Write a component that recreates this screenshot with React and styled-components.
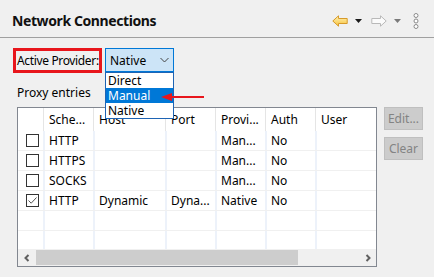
import React from "react";
import styled, { createGlobalStyle } from "styled-components";

const GlobalStyle = createGlobalStyle`
  html, body { margin: 0; padding: 0; background: #f0f0f0; }
  body { font-family: "Noto Sans", "Open Sans", sans-serif; font-size: 12px; color: #000; }
  * { box-sizing: border-box; }
`;

const Page = styled.div`
  width: 434px;
  height: 277px;
  background: #f0f0f0;
  overflow: hidden;
`;

const Header = styled.div`
  height: 38px;
  display: flex;
  align-items: center;
  justify-content: space-between;
  padding: 4px 15px 0 12px;
  border-bottom: 1px solid #a0a0a0;
`;

const Title = styled.h1`
  margin: 0;
  font-size: 14px;
  font-weight: 700;
  color: #111;
  letter-spacing: -0.4px;
`;

const Toolbar = styled.div`
  display: flex;
  align-items: center;
`;

const ToolIcon = styled.span`
  display: inline-flex;
  margin-left: ${(p) => p.$gap || 0}px;
`;

const Body = styled.div`
  padding: 10px 0 0 13px;
`;

const ProviderRow = styled.div`
  display: flex;
  align-items: flex-start;
  gap: 3px;
  height: 25px;
`;

const Annotated = styled.div`
  border: 3px solid #e8161c;
  height: 25px;
  width: 89px;
  display: flex;
  align-items: center;
  padding-left: 1px;
  white-space: nowrap;
  letter-spacing: -0.35px;
`;

const ComboWrap = styled.div`
  position: relative;
`;

const Combo = styled.div`
  width: 69px;
  height: 24px;
  border: 1px solid #0078d7;
  background: #cce4f7;
  display: flex;
  align-items: center;
  justify-content: space-between;
  padding: 0 4px 0 4px;
`;

const DropList = styled.ul`
  position: absolute;
  left: 0;
  top: 24px;
  width: 69px;
  margin: 0;
  padding: 0;
  list-style: none;
  background: #fff;
  border: 1px solid #1e64b4;
  z-index: 2;
`;

const DropItem = styled.li`
  height: 15px;
  line-height: 15px;
  padding-left: 2px;
  background: ${(p) => (p.$active ? "#0078d7" : "#fff")};
  color: ${(p) => (p.$active ? "#fff" : "#000")};
`;

const PointerArrow = styled.svg`
  position: absolute;
  left: 56px;
  top: 44px;
  z-index: 3;
`;

const SectionLabel = styled.div`
  margin: 12px 0 6px 4px;
  height: 16px;
  line-height: 16px;
`;

const TableArea = styled.div`
  display: flex;
  gap: 7px;
  margin-left: 4px;
`;

const Table = styled.div`
  width: 360px;
  height: 160px;
  border: 1px solid #828790;
  background: #fff;
  display: flex;
  flex-direction: column;
  overflow: hidden;
`;

const cols = "25px 50px 72px 50px 50px 50px 1fr";

const HeadRow = styled.div`
  display: grid;
  grid-template-columns: ${cols};
  height: 23px;
  flex: none;
`;

const HeadCell = styled.div`
  padding-left: 5px;
  display: flex;
  align-items: center;
  white-space: nowrap;
  border-left: ${(p) => (p.$first ? "none" : "1px solid #e5e5e5")};
`;

const Rows = styled.div`
  flex: 1;
  overflow: hidden;
`;

const Row = styled.div`
  display: grid;
  grid-template-columns: ${cols};
  height: 20px;
  border-bottom: 1px solid #f0f0f0;
`;

const Cell = styled.div`
  padding-left: 4px;
  display: flex;
  align-items: center;
  white-space: nowrap;
  border-left: ${(p) => (p.$first ? "none" : "2px solid #edf2fa")};
`;

const CheckCell = styled.div`
  display: flex;
  align-items: center;
  padding-left: 8px;
`;

const Box = styled.span`
  width: 13px;
  height: 13px;
  border: 1px solid #333;
  background: #fff;
  display: inline-flex;
  align-items: center;
  justify-content: center;
`;

const ScrollBar = styled.div`
  height: 17px;
  flex: none;
  background: #f0f0f0;
  display: flex;
  align-items: center;
`;

const ScrollBtn = styled.div`
  width: 17px;
  height: 17px;
  display: flex;
  align-items: center;
  justify-content: center;
`;

const Track = styled.div`
  flex: 1;
  height: 17px;
  display: flex;
  align-items: center;
`;

const Thumb = styled.div`
  margin-left: 1px;
  width: 262px;
  height: 15px;
  background: #cdcdcd;
`;

const ButtonCol = styled.div`
  display: flex;
  flex-direction: column;
  gap: 7px;
`;

const Btn = styled.button`
  width: 39px;
  height: 23px;
  background: #cccccc;
  border: 1px solid #bfbfbf;
  color: #838383;
  font-family: inherit;
  font-size: 12px;
  padding: 0;
`;

const BackIcon = () => (
  <svg width="16" height="12" viewBox="0 0 16 12">
    <defs>
      <linearGradient id="bk" x1="0" y1="0" x2="0" y2="1">
        <stop offset="0" stopColor="#fff3b8" />
        <stop offset="1" stopColor="#f7c23a" />
      </linearGradient>
    </defs>
    <path d="M0.8 6 L6.5 0.8 L6.5 3.5 L15.2 3.5 L15.2 8.5 L6.5 8.5 L6.5 11.2 Z" fill="url(#bk)" stroke="#d79a2a" strokeWidth="1" strokeLinejoin="round" />
  </svg>
);

const FwdIcon = () => (
  <svg width="16" height="12" viewBox="0 0 16 12">
    <path d="M15.2 6 L9.5 0.8 L9.5 3.5 L0.8 3.5 L0.8 8.5 L9.5 8.5 L9.5 11.2 Z" fill="#fbfbfb" stroke="#b9b9b9" strokeWidth="1" strokeLinejoin="round" />
  </svg>
);

const Tri = ({ color }) => (
  <svg width="7" height="4" viewBox="0 0 7 4">
    <path d="M0 0 L7 0 L3.5 4 Z" fill={color} />
  </svg>
);

const Dots = () => (
  <svg width="6" height="16" viewBox="0 0 6 16">
    {[2.5, 8, 13.5].map((y) => (
      <circle key={y} cx="3" cy={y} r="2" fill="#fff" stroke="#8a8a8a" strokeWidth="1" />
    ))}
  </svg>
);

const Chevron = ({ dir }) => (
  <svg width="8" height="8" viewBox="0 0 8 8">
    <path d={dir === "left" ? "M5.5 1 L2.5 4 L5.5 7" : "M2.5 1 L5.5 4 L2.5 7"} fill="none" stroke="#606060" strokeWidth="2" />
  </svg>
);

const rows = [
  { checked: false, cells: ["HTTP", "", "", "Man...", "No", ""] },
  { checked: false, cells: ["HTTPS", "", "", "Man...", "No", ""] },
  { checked: false, cells: ["SOCKS", "", "", "Man...", "No", ""] },
  { checked: true, cells: ["HTTP", "Dynamic", "Dyna...", "Native", "No", ""] },
  { empty: true, cells: ["", "", "", "", "", ""] },
  { empty: true, cells: ["", "", "", "", "", ""] },
];

export default function App() {
  return (
    <Page>
      <GlobalStyle />
      <Header>
        <Title>Network Connections</Title>
        <Toolbar>
          <ToolIcon><BackIcon /></ToolIcon>
          <ToolIcon $gap={7}><Tri color="#1a1a1a" /></ToolIcon>
          <ToolIcon $gap={9}><FwdIcon /></ToolIcon>
          <ToolIcon $gap={7}><Tri color="#7a7a7a" /></ToolIcon>
          <ToolIcon $gap={12}><Dots /></ToolIcon>
        </Toolbar>
      </Header>
      <Body>
        <ProviderRow>
          <Annotated>Active Provider:</Annotated>
          <ComboWrap>
            <Combo>
              <span>Native</span>
              <svg width="9" height="6" viewBox="0 0 9 6">
                <path d="M0.5 1 L4.5 5 L8.5 1" fill="none" stroke="#444" strokeWidth="1" />
              </svg>
            </Combo>
            <DropList>
              <DropItem>Direct</DropItem>
              <DropItem $active>Manual</DropItem>
              <DropItem>Native</DropItem>
            </DropList>
            <PointerArrow width="44" height="10" viewBox="0 0 44 10">
              <path d="M0 5 L11 1 L11 4 L43 4 L43 6 L11 6 L11 9 Z" fill="#e8161c" />
            </PointerArrow>
          </ComboWrap>
        </ProviderRow>
        <SectionLabel>Proxy entries</SectionLabel>
        <TableArea>
          <Table>
            <HeadRow>
              <HeadCell $first />
              <HeadCell>Sche...</HeadCell>
              <HeadCell>Host</HeadCell>
              <HeadCell>Port</HeadCell>
              <HeadCell>Provi...</HeadCell>
              <HeadCell>Auth</HeadCell>
              <HeadCell>User</HeadCell>
            </HeadRow>
            <Rows>
              {rows.map((r, i) => (
                <Row key={i}>
                  <CheckCell>
                    {!r.empty && (
                      <Box>
                        {r.checked && (
                          <svg width="11" height="11" viewBox="0 0 11 11">
                            <path d="M1.5 5.5 L4.2 8.2 L9.5 2.5" fill="none" stroke="#555" strokeWidth="1" />
                          </svg>
                        )}
                      </Box>
                    )}
                  </CheckCell>
                  {r.cells.map((c, j) => (
                    <Cell key={j}>{c}</Cell>
                  ))}
                </Row>
              ))}
            </Rows>
            <ScrollBar>
              <ScrollBtn><Chevron dir="left" /></ScrollBtn>
              <Track><Thumb /></Track>
              <ScrollBtn><Chevron dir="right" /></ScrollBtn>
            </ScrollBar>
          </Table>
          <ButtonCol>
            <Btn>Edit...</Btn>
            <Btn>Clear</Btn>
          </ButtonCol>
        </TableArea>
      </Body>
    </Page>
  );
}
